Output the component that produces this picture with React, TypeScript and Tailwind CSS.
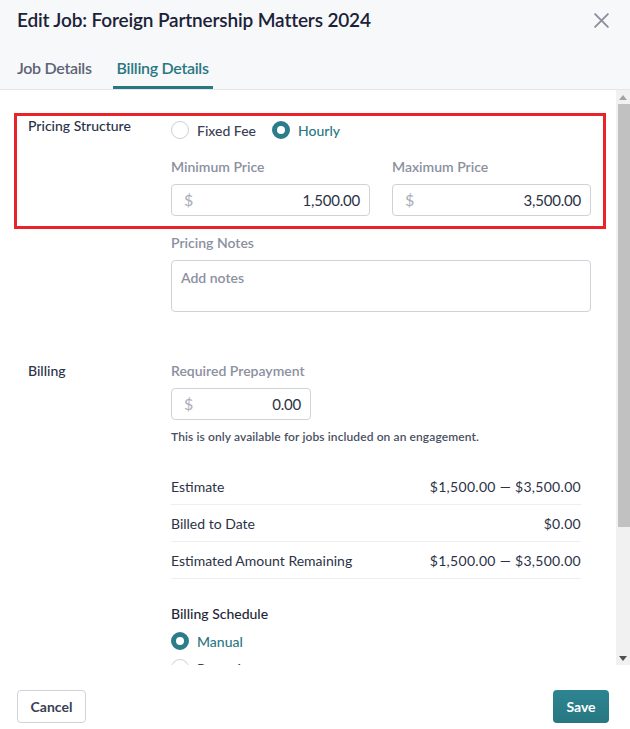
import React, { useState } from "react";

function Radio({ checked, label, onClick }: { checked: boolean; label: string; onClick?: () => void }) {
  return (
    <button type="button" onClick={onClick} className="flex items-center gap-[8px] h-[24px]">
      <span
        className={
          checked
            ? "w-[18px] h-[18px] rounded-full border-[5px] border-[#2a7d89] bg-white"
            : "w-[18px] h-[18px] rounded-full border border-[#cdd0d7] bg-white"
        }
      />
      <span className={checked ? "text-[14px] font-medium text-[#2a7782]" : "text-[14px] font-medium text-[#3a4055]"}>
        {label}
      </span>
    </button>
  );
}

function MoneyInput({ value, className }: { value: string; className: string }) {
  return (
    <div className={`flex items-center h-[32px] border border-[#cfd2d9] rounded-[4px] pl-[12px] pr-[9px] ${className}`}>
      <span className="text-[16px] text-[#a9adb8]">$</span>
      <span className="ml-auto text-[15px] text-[#2c3246] tracking-[-0.2px]">{value}</span>
    </div>
  );
}

function SummaryRow({ label, value }: { label: string; value: string }) {
  return (
    <div className="flex items-center justify-between h-[37px] border-b border-[#eceef1] text-[14px] text-[#2c3246]">
      <span>{label}</span>
      <span className="tracking-[0.3px]">{value}</span>
    </div>
  );
}

// classic scrollbar beside the form body
function ScrollTrack() {
  return (
    <div className="w-[14px] bg-[#f1f1f1] flex flex-col">
      <div className="h-[14px] flex items-center justify-center">
        <svg width="8" height="5" viewBox="0 0 8 5">
          <path d="M0 5L4 0L8 5Z" fill="#a3a3a3" />
        </svg>
      </div>
      <div className="h-[423px] ml-[2px] bg-[#c1c1c1]" />
      <div className="flex-1" />
      <div className="h-[14px] flex items-center justify-center">
        <svg width="8" height="5" viewBox="0 0 8 5">
          <path d="M0 0L8 0L4 5Z" fill="#505050" />
        </svg>
      </div>
    </div>
  );
}

export default function App() {
  const [tab, setTab] = useState("billing");
  const [pricing, setPricing] = useState("hourly");
  const [schedule, setSchedule] = useState("manual");

  const tabClass = (active: boolean) =>
    `px-[4px] pb-[6px] text-[16px] font-semibold tracking-[-0.3px] border-b-[3px] rounded-t-[3px] ${
      active ? "text-[#2a7782] border-[#2a7782]" : "text-[#5d6475] border-transparent"
    }`;

  return (
    <div className="w-[630px] h-[729px] flex flex-col bg-white font-['Lato',sans-serif] overflow-hidden">
      <header className="h-[90px] bg-[#f7f8fa] border-b border-[#e4e6ea] flex flex-col">
        <div className="flex items-center justify-between pl-[17px] pr-[20px] pt-[6px] h-[34px]">
          <h1 className="text-[19px] font-semibold text-[#1b2238] tracking-[-0.15px]">
            Edit Job: Foreign Partnership Matters 2024
          </h1>
          <button type="button" className="text-[#8c909c]">
            <svg width="17" height="17" viewBox="0 0 16 16" fill="none" stroke="currentColor" strokeWidth="1.8" strokeLinecap="round">
              <path d="M2 2L14 14M14 2L2 14" />
            </svg>
          </button>
        </div>
        <nav className="flex mt-auto pl-[13px] gap-[17px]">
          <button type="button" onClick={() => setTab("job")} className={tabClass(tab === "job")}>
            Job Details
          </button>
          <button type="button" onClick={() => setTab("billing")} className={tabClass(tab === "billing")}>
            Billing Details
          </button>
        </nav>
      </header>

      <div className="flex-1 flex min-h-0">
        <main className="flex-1 overflow-hidden">
          <div className="pt-[23px] pb-[150px]">
            {/* pricing structure */}
            <section className="ml-[14px] mr-[10px] border-[3px] border-[#e8232a] pl-[11px] pr-[12px] pb-[10px] flex">
              <div className="w-[143px] text-[14px] font-medium text-[#2a3148] leading-[20px]">Pricing Structure</div>
              <div className="flex-1">
                <div className="flex gap-[16px] pt-[2px]">
                  <Radio checked={pricing === "fixed"} label="Fixed Fee" onClick={() => setPricing("fixed")} />
                  <Radio checked={pricing === "hourly"} label="Hourly" onClick={() => setPricing("hourly")} />
                </div>
                <div className="grid grid-cols-2 gap-[22px] mt-[15px]">
                  <div>
                    <div className="text-[14px] font-semibold text-[#8b90a0] leading-[20px] mb-[7px]">Minimum Price</div>
                    <MoneyInput value="1,500.00" className="w-full" />
                  </div>
                  <div>
                    <div className="text-[14px] font-semibold text-[#8b90a0] leading-[20px] mb-[7px]">Maximum Price</div>
                    <MoneyInput value="3,500.00" className="w-full" />
                  </div>
                </div>
              </div>
            </section>

            <div className="ml-[171px] w-[420px] mt-[4px]">
              <div className="text-[14px] font-semibold text-[#8b90a0] leading-[20px] mb-[7px]">Pricing Notes</div>
              <textarea
                placeholder="Add notes"
                className="block w-full h-[52px] resize-none border border-[#cfd2d9] rounded-[4px] px-[9px] py-[6px] text-[14px] font-semibold placeholder:text-[#8b90a0] outline-none"
              />
            </div>

            {/* billing */}
            <section className="flex pl-[28px] mt-[49px]">
              <div className="w-[143px] text-[14px] font-medium text-[#2a3148] leading-[20px]">Billing</div>
              <div className="w-[420px]">
                <div className="text-[14px] font-semibold text-[#8b90a0] leading-[20px] mb-[7px]">Required Prepayment</div>
                <MoneyInput value="0.00" className="w-[140px]" />
                <p className="mt-[9px] text-[12px] font-semibold text-[#4a5063] leading-[16px] tracking-[0.1px]">
                  This is only available for jobs included on an engagement.
                </p>

                <div className="w-[410px] mt-[23px]">
                  <SummaryRow label="Estimate" value="$1,500.00 — $3,500.00" />
                  <SummaryRow label="Billed to Date" value="$0.00" />
                  <SummaryRow label="Estimated Amount Remaining" value="$1,500.00 — $3,500.00" />
                </div>

                <div className="mt-[25px] text-[14px] font-medium text-[#1f2638] leading-[20px]">Billing Schedule</div>
                <div className="flex flex-col gap-[3px] mt-[5px]">
                  <Radio checked={schedule === "manual"} label="Manual" onClick={() => setSchedule("manual")} />
                  <Radio checked={schedule === "recurring"} label="Recurring" onClick={() => setSchedule("recurring")} />
                </div>
              </div>
            </section>
          </div>
        </main>
        <ScrollTrack />
      </div>

      <footer className="h-[64px] flex items-start justify-between pt-[25px] pl-[17px] pr-[21px]">
        <button
          type="button"
          className="h-[33px] w-[69px] border border-[#cfd2d9] rounded-[4px] text-[14px] font-bold text-[#3a4055] bg-white"
        >
          Cancel
        </button>
        <button
          type="button"
          className="h-[33px] w-[56px] rounded-[4px] text-[14px] font-bold text-white bg-gradient-to-b from-[#2d8591] to-[#277782]"
        >
          Save
        </button>
      </footer>
    </div>
  );
}
